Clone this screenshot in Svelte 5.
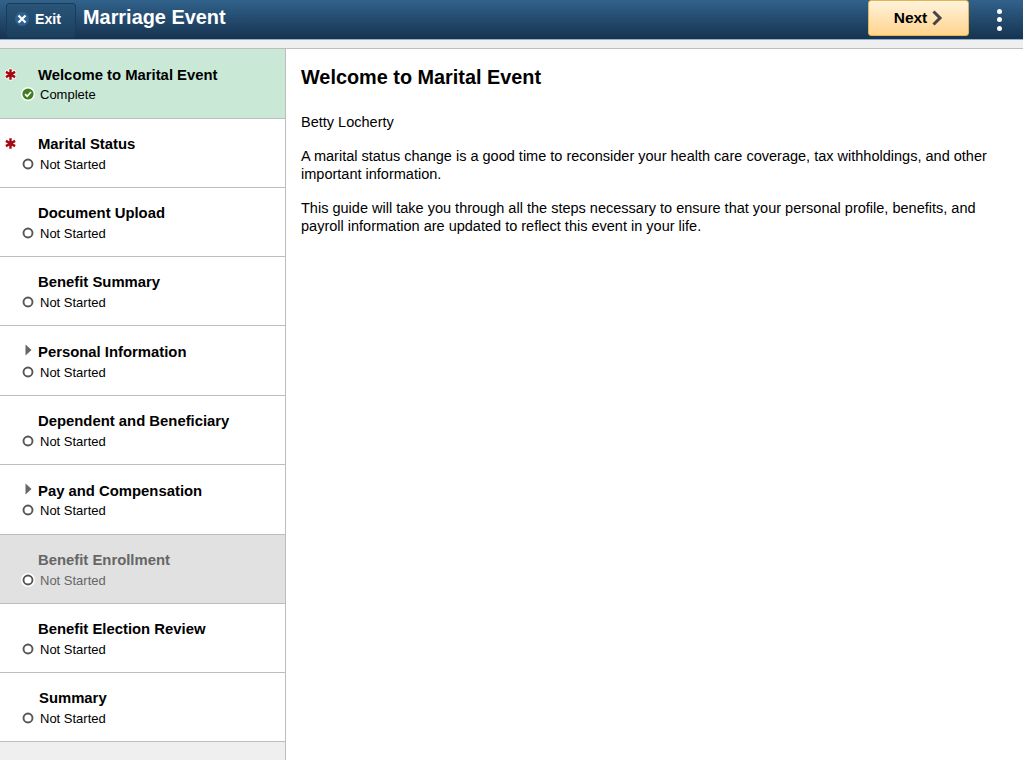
<script lang="ts">
	interface Step {
		title: string;
		status: string;
		required?: boolean;
		expandable?: boolean;
		current?: boolean;
		disabled?: boolean;
		complete?: boolean;
		nudge?: boolean;
		tall?: boolean;
		tight?: boolean;
	}

	// Rows alternate between 69 and 70px in the original, from rounding.
	const steps: Step[] = [
		{ title: 'Welcome to Marital Event', status: 'Complete', required: true, current: true, complete: true, tall: true, tight: true },
		{ title: 'Marital Status', status: 'Not Started', required: true },
		{ title: 'Document Upload', status: 'Not Started' },
		{ title: 'Benefit Summary', status: 'Not Started' },
		{ title: 'Personal Information', status: 'Not Started', expandable: true, tall: true },
		{ title: 'Dependent and Beneficiary', status: 'Not Started' },
		{ title: 'Pay and Compensation', status: 'Not Started', expandable: true, tall: true, tight: true },
		{ title: 'Benefit Enrollment', status: 'Not Started', disabled: true },
		{ title: 'Benefit Election Review', status: 'Not Started' },
		{ title: 'Summary', status: 'Not Started', nudge: true }
	];
</script>

<div class="page">
	<header class="banner">
		<button class="exit">
			<span class="exit-badge">
				<svg width="10" height="10" viewBox="0 0 10 10">
					<path d="M1.5 1.5 L8.5 8.5 M8.5 1.5 L1.5 8.5" stroke="#fff" stroke-width="2.2" />
				</svg>
			</span>
			Exit
		</button>
		<h1>Marriage Event</h1>
		<button class="next">
			Next
			<svg width="12" height="16" viewBox="0 0 12 16">
				<path d="M2.5 1.5 L9 8 L2.5 14.5" fill="none" stroke="#444" stroke-width="3" />
			</svg>
		</button>
		<div class="kebab" aria-label="Actions">
			<span></span><span></span><span></span>
		</div>
	</header>
	<div class="strip"></div>

	<div class="body">
		<nav class="rail">
			{#each steps as step}
				<div
					class="step"
					class:current={step.current}
					class:disabled={step.disabled}
					class:tall={step.tall}
					class:tight={step.tight}
				>
					<div class="title-row">
						{#if step.required}
							<svg class="star" width="13" height="13" viewBox="0 0 13 13">
								<path
									d="M6.5 0.5 V12.5 M1.3 3.5 L11.7 9.5 M11.7 3.5 L1.3 9.5"
									stroke="#fff"
									stroke-width="3.8"
								/>
								<path
									d="M6.5 1.2 V11.8 M1.9 3.85 L11.1 9.15 M11.1 3.85 L1.9 9.15"
									stroke="#a50a12"
									stroke-width="2.4"
								/>
							</svg>
						{/if}
						{#if step.expandable}
							<svg class="caret" width="7" height="12" viewBox="0 0 7 12">
								<path d="M0.5 0.5 L6.5 6 L0.5 11.5 Z" fill="#666" />
							</svg>
						{/if}
						<span class="title" class:nudge={step.nudge}>{step.title}</span>
					</div>
					<div class="status-row">
						{#if step.complete}
							<svg class="status-icon" width="14" height="14" viewBox="0 0 14 14">
								<circle cx="7" cy="7" r="7" fill="#fff" />
								<circle cx="7" cy="7" r="5.6" fill="#3f7d20" />
								<path d="M4 7.2 L6.2 9.2 L10 5" fill="none" stroke="#fff" stroke-width="1.7" />
							</svg>
						{:else}
							<svg class="status-icon" width="14" height="14" viewBox="0 0 14 14">
								{#if step.disabled}
									<circle cx="7" cy="7" r="7" fill="#fff" />
								{/if}
								<circle cx="7" cy="7" r="4.5" fill="#fff" stroke="#555" stroke-width="1.9" />
							</svg>
						{/if}
						<span class="status">{step.status}</span>
					</div>
				</div>
			{/each}
		</nav>

		<main class="content">
			<h2>Welcome to Marital Event</h2>
			<p>Betty Locherty</p>
			<p>
				A marital status change is a good time to reconsider your health care coverage, tax
				withholdings, and other important information.
			</p>
			<p>
				This guide will take you through all the steps necessary to ensure that your personal
				profile, benefits, and payroll information are updated to reflect this event in your life.
			</p>
		</main>
	</div>
</div>

<style>
	:global(body) {
		margin: 0;
		background: #fff;
		overflow: hidden;
	}

	.page {
		height: 760px;
		display: flex;
		flex-direction: column;
		font-family: 'Liberation Sans', Arial, sans-serif;
		color: #000;
	}

	.banner {
		height: 39px;
		flex-shrink: 0;
		display: flex;
		align-items: center;
		padding: 0 21px 0 6px;
		background: linear-gradient(#31628c, #16334f);
		border-bottom: 1px solid #8fb0cc;
	}

	.exit {
		width: 70px;
		height: 35px;
		margin-top: 1px;
		display: flex;
		align-items: center;
		padding: 0 0 2px 8px;
		gap: 6px;
		background: linear-gradient(#2a5579, #1b3f5e);
		border: 1px solid #1b3a56;
		border-radius: 3px;
		color: #fff;
		font: bold 14.2px 'Liberation Sans', Arial, sans-serif;
	}

	.exit-badge {
		width: 14px;
		height: 14px;
		border-radius: 50%;
		background: #2f6391;
		display: flex;
		align-items: center;
		justify-content: center;
	}

	h1 {
		margin: -4px 0 0 7px;
		font-size: 19.9px;
		font-weight: bold;
		color: #fff;
		flex: 1;
	}

	.next {
		width: 101px;
		height: 36px;
		margin-top: -4px;
		display: flex;
		align-items: center;
		justify-content: center;
		gap: 4px;
		background: linear-gradient(#fff3dc, #ffd48e);
		border: 1px solid #e6b44e;
		border-radius: 3px;
		color: #000;
		font: bold 15.5px 'Liberation Sans', Arial, sans-serif;
	}

	.kebab {
		margin-left: 28px;
		display: flex;
		flex-direction: column;
		gap: 3.5px;
	}

	.kebab span {
		width: 5px;
		height: 5px;
		border-radius: 50%;
		background: #fff;
	}

	.strip {
		height: 8px;
		flex-shrink: 0;
		background: #efefef;
		border-bottom: 1px solid #bdbdbd;
	}

	.body {
		flex: 1;
		display: flex;
		min-height: 0;
	}

	.rail {
		width: 285px;
		flex-shrink: 0;
		background: #efefef;
		border-right: 1px solid #bdbdbd;
	}

	.step {
		box-sizing: border-box;
		height: 69px;
		padding: 16px 0 0 38px;
		background: #fff;
		border-bottom: 1px solid #bdbdbd;
	}

	.step.tall {
		height: 70px;
		padding-top: 17px;
	}

	.step.current {
		background: #c9e9d6;
	}

	.step.disabled {
		background: #e1e1e1;
		color: #666;
	}

	.title-row {
		position: relative;
		height: 17px;
		display: flex;
		align-items: center;
	}

	.star {
		position: absolute;
		left: -34px;
		top: 2px;
	}

	.caret {
		position: absolute;
		left: -13px;
		top: 1px;
	}

	.title {
		font-size: 14.85px;
		font-weight: bold;
		white-space: nowrap;
	}

	.title.nudge {
		margin-left: 1px;
	}

	.status-row {
		position: relative;
		margin-top: 4px;
		height: 16px;
		padding-left: 2px;
		display: flex;
		align-items: center;
	}

	.tight .status-row {
		margin-top: 3px;
	}

	.status-icon {
		position: absolute;
		left: -17px;
		top: 1px;
	}

	.status {
		font-size: 13px;
		white-space: nowrap;
	}

	.content {
		flex: 1;
		min-width: 0;
		padding: 16px 15px 0 15px;
	}

	h2 {
		margin: 0 0 23px;
		font-size: 19.85px;
		line-height: 25px;
		font-weight: bold;
	}

	p {
		margin: 0 0 16px;
		font-size: 14.52px;
		line-height: 18px;
	}
</style>
